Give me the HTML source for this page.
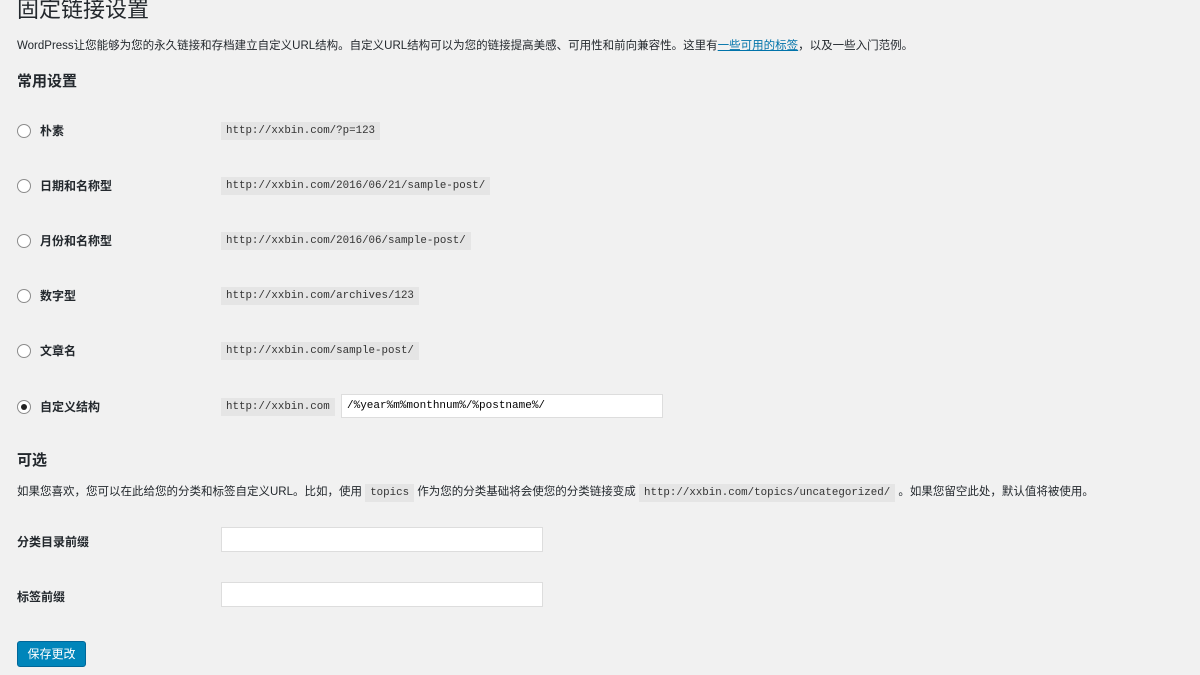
<!DOCTYPE html>
<html><head><meta charset="utf-8"><style>
body{margin:0;width:1200px;height:675px;background:#f1f1f1;font-family:"Liberation Sans","Noto Sans CJK SC",sans-serif;color:#23282d;overflow:hidden;position:relative;font-size:12px}
.a{position:absolute;white-space:nowrap}
h1{position:absolute;left:17px;top:-8px;margin:0;font-size:22px;font-weight:400;color:#23282d}
h2{position:absolute;left:17px;margin:0;font-size:15px;font-weight:700}
code{font-family:"Liberation Mono",monospace;font-size:10.8px;background:#e5e5e5;padding:3px 5px;color:#333}
.r{position:absolute;left:17px;width:12px;height:12px;border:1px solid #8c8c8c;border-radius:50%;background:#fff}
.l{position:absolute;left:40px;font-weight:700;font-size:12px}
.c{position:absolute;left:221px}
input{position:absolute;border:1px solid #ddd;background:#fff;height:22px;box-sizing:border-box;font-family:"Liberation Mono",monospace;font-size:11px;padding:0 5px;margin:0}
</style></head><body>
<h1>固定链接设置</h1>
<div class="a" style="left:17px;top:37px;font-size:11.5px">WordPress让您能够为您的永久链接和存档建立自定义URL结构。自定义URL结构可以为您的链接提高美感、可用性和前向兼容性。这里有<span style="color:#0073aa;text-decoration:underline">一些可用的标签</span>，以及一些入门范例。</div>
<h2 style="top:70px">常用设置</h2>
<div class="r" style="top:124px"></div><div class="l" style="top:122px">朴素</div><div class="c" style="top:122px"><code>http://xxbin.com/?p=123</code></div>
<div class="r" style="top:179px"></div><div class="l" style="top:177px">日期和名称型</div><div class="c" style="top:177px"><code>http://xxbin.com/2016/06/21/sample-post/</code></div>
<div class="r" style="top:234px"></div><div class="l" style="top:232px">月份和名称型</div><div class="c" style="top:232px"><code>http://xxbin.com/2016/06/sample-post/</code></div>
<div class="r" style="top:289px"></div><div class="l" style="top:287px">数字型</div><div class="c" style="top:287px"><code>http://xxbin.com/archives/123</code></div>
<div class="r" style="top:344px"></div><div class="l" style="top:342px">文章名</div><div class="c" style="top:342px"><code>http://xxbin.com/sample-post/</code></div>
<div class="r" style="top:400px"><div style="width:6px;height:6px;border-radius:50%;background:#222;margin:3px"></div></div><div class="l" style="top:398px">自定义结构</div><div class="c" style="top:398px"><code>http://xxbin.com</code></div>
<input style="left:341px;top:394px;width:322px;height:24px" value="/%year%m%monthnum%/%postname%/">
<h2 style="top:449px">可选</h2>
<div class="a" style="left:17px;top:483px;font-size:11.5px">如果您喜欢，您可以在此给您的分类和标签自定义URL。比如，使用 <code>topics</code> 作为您的分类基础将会使您的分类链接变成 <code>http://xxbin.com/topics/uncategorized/</code> 。如果您留空此处，默认值将被使用。</div>
<div class="l" style="left:17px;top:533px">分类目录前缀</div><input style="left:221px;top:527px;width:322px;height:25px">
<div class="l" style="left:17px;top:588px">标签前缀</div><input style="left:221px;top:582px;width:322px;height:25px">
<div class="a" style="left:17px;top:641px;width:69px;height:26px;background:#0085ba;border:1px solid #006799;box-sizing:border-box;border-radius:3px;color:#fff;text-align:center;line-height:24px;font-size:12px">保存更改</div>
</body></html>
